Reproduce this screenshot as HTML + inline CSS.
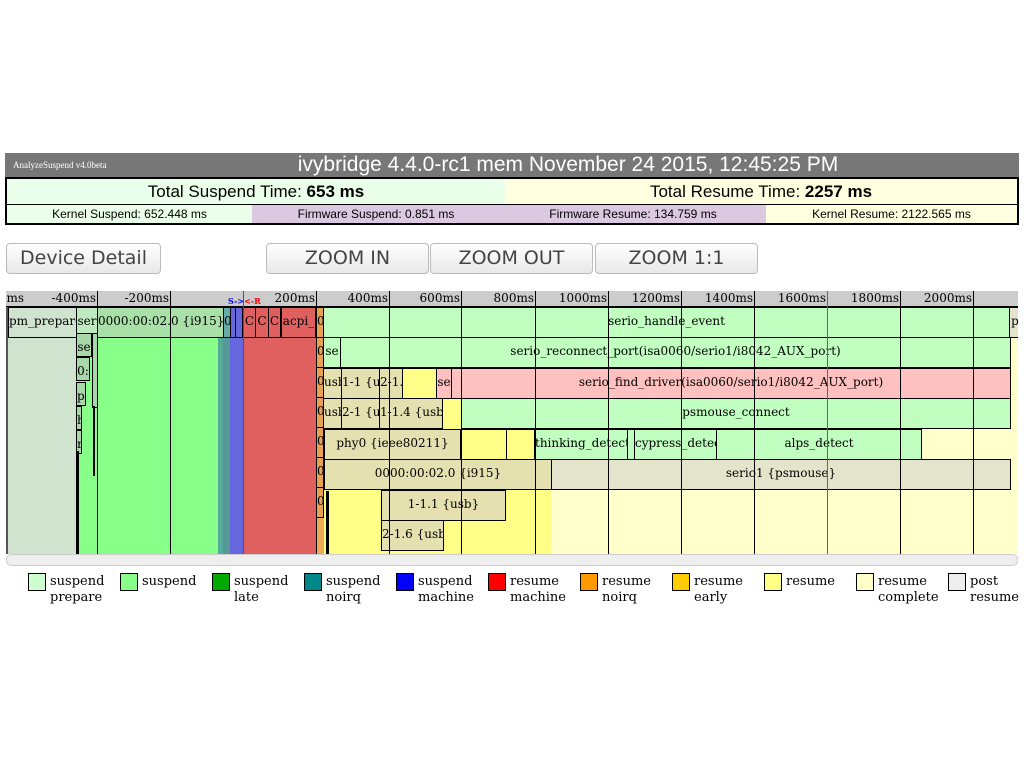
<!DOCTYPE html>
<html><head><meta charset="utf-8"><style>
*{margin:0;padding:0;box-sizing:border-box}
body{width:1024px;height:768px;background:#fff;position:relative;overflow:hidden;font-family:"Liberation Sans",sans-serif}
.a{position:absolute}
.hdr{left:5px;top:153px;width:1014px;height:24px;background:#777;color:#fff}
.tbl{left:5px;top:177px;width:1014px;height:48px;border:2px solid #000;background:#fff}
.c{position:absolute;text-align:center;color:#000}
.btn{position:absolute;top:243px;height:31px;border:1px solid #bbb;border-radius:4px;background:linear-gradient(#fff,#e8e8e8);font-size:19px;color:#444;text-align:center;line-height:29px;font-family:"DejaVu Sans",sans-serif}
.tl{left:6px;top:291px;width:1012px;height:263px;overflow:hidden;background:#fff;font-family:"DejaVu Serif",serif;font-size:12px}
.b{position:absolute;border:1px solid #000;overflow:hidden;white-space:nowrap;text-align:center;line-height:27px;height:31px}
.g{position:absolute;top:0;width:1px;height:263px;background:#000}
.lbl{position:absolute;top:0;width:70px;text-align:right;font-size:12px;line-height:15px;font-family:"DejaVu Serif",serif}
.lg{position:absolute;top:573px;font-family:"DejaVu Serif",serif;font-size:13px;line-height:16px}
.lg i{position:absolute;left:0;top:0;width:18px;height:18px;border:1px solid #000}
.lg span{position:absolute;left:22px;top:1px;white-space:nowrap}
</style></head><body>
<div class="a hdr"><div class="a" style="left:8px;top:7px;font-size:9px;font-family:'Liberation Serif',serif">AnalyzeSuspend v4.0beta</div><div class="a" style="left:112px;width:902px;text-align:center;top:0;font-size:21px;line-height:24px">ivybridge 4.4.0-rc1 mem November 24 2015, 12:45:25 PM</div></div>
<div class="a tbl">
<div class="c" style="left:0;top:0;width:498px;height:25px;background:#eaffea;font-size:17px;line-height:25px">Total Suspend Time: <b>653 ms</b></div>
<div class="c" style="left:498px;top:0;width:512px;height:25px;background:#ffffe0;font-size:17px;line-height:25px">Total Resume Time: <b>2257 ms</b></div>
<div class="a" style="left:0;top:25px;width:1010px;height:1px;background:#000"></div>
<div class="c" style="left:0;top:26px;width:245px;height:18px;background:#eaffea;font-size:12px;line-height:18px">Kernel Suspend: 652.448 ms</div>
<div class="c" style="left:245px;top:26px;width:248px;height:18px;background:#dcc8e0;font-size:12px;line-height:18px">Firmware Suspend: 0.851 ms</div>
<div class="c" style="left:493px;top:26px;width:266px;height:18px;background:#dcc8e0;font-size:12px;line-height:18px">Firmware Resume: 134.759 ms</div>
<div class="c" style="left:759px;top:26px;width:251px;height:18px;background:#ffffe0;font-size:12px;line-height:18px">Kernel Resume: 2122.565 ms</div>
</div>
<div class="btn" style="left:6px;width:155px">Device Detail</div>
<div class="btn" style="left:266px;width:163px">ZOOM IN</div>
<div class="btn" style="left:430px;width:163px">ZOOM OUT</div>
<div class="btn" style="left:595px;width:163px">ZOOM 1:1</div>

<div class="a tl">
<div class="a" style="left:0;top:0;width:1012px;height:16px;background:#ccc;border-bottom:1px solid #000"></div>
<div class="a" style="left:2px;top:16px;width:68px;height:247px;background:#cfe3cf"></div>
<div class="a" style="left:0;top:16px;width:2px;height:247px;background:#555"></div>
<div class="a" style="left:70px;top:16px;width:142px;height:247px;background:#88ff88"></div>
<div class="a" style="left:212px;top:16px;width:12px;height:247px;background:#5a9"></div>
<div class="a" style="left:217px;top:16px;width:7px;height:247px;background:#599"></div>
<div class="a" style="left:224px;top:16px;width:13px;height:247px;background:#66d"></div>
<div class="a" style="left:237px;top:16px;width:73px;height:247px;background:#e06060"></div>
<div class="a" style="left:310px;top:16px;width:8px;height:247px;background:#ea5"></div>
<div class="a" style="left:318px;top:16px;width:227px;height:247px;background:#ffff88"></div>
<div class="a" style="left:545px;top:16px;width:467px;height:247px;background:#ffffcc"></div>
<div class="b" style="left:2px;top:16px;width:69px;background:#cfe3cf">pm_prepare</div>
<div class="b" style="left:70px;top:16px;width:22px;background:#bfe9bf">ser</div>
<div class="b" style="left:91px;top:16px;width:127px;background:#a8e0a8">0000:00:02.0 {i915}</div>
<div class="b" style="left:70px;top:42px;width:16px;height:24px;background:#a8d8a8">se</div>
<div class="b" style="left:70px;top:66px;width:14px;height:24px;background:#a8d8a8">0:</div>
<div class="b" style="left:70px;top:91px;width:10px;height:24px;background:#a8d8a8">pl</div>
<div class="b" style="left:70px;top:115px;width:6px;height:24px;background:#a8d8a8">h</div>
<div class="b" style="left:70px;top:139px;width:6px;height:24px;background:#a8d8a8">r</div>
<div class="b" style="left:86px;top:42px;width:6px;height:75px;background:#a8d8a8"></div>
<div class="a" style="left:70px;top:160px;width:3px;height:103px;background:#000"></div>
<div class="a" style="left:87px;top:115px;width:2px;height:70px;background:#000"></div>
<div class="b" style="left:217px;top:16px;width:8px;background:#6aa">0</div>
<div class="b" style="left:224px;top:16px;width:6px;background:#66d"></div>
<div class="b" style="left:229px;top:16px;width:8px;background:#66d"></div>
<div class="b" style="left:237px;top:16px;width:13px;background:#e06060">C</div>
<div class="b" style="left:249px;top:16px;width:14px;background:#e06060">C</div>
<div class="b" style="left:262px;top:16px;width:13px;background:#e06060">C</div>
<div class="b" style="left:275px;top:16px;width:35px;background:#e06060">acpi_</div>
<div class="b" style="left:310px;top:16px;width:8px;background:#e9a050">0</div>
<div class="b" style="left:310px;top:46px;width:8px;background:#e9a050">0</div>
<div class="b" style="left:310px;top:76px;width:8px;background:#e9a050">0</div>
<div class="b" style="left:310px;top:106px;width:8px;background:#e9a050">0</div>
<div class="b" style="left:310px;top:136px;width:8px;background:#e9a050">0</div>
<div class="b" style="left:310px;top:166px;width:8px;background:#e9a050">0</div>
<div class="b" style="left:310px;top:196px;width:8px;background:#e9a050">0</div>
<div class="b" style="left:317px;top:16px;width:687px;background:#c0ffc0">serio_handle_event</div>
<div class="b" style="left:1003px;top:16px;width:12px;background:#e4e4cc">p</div>
<div class="b" style="left:317px;top:46px;width:18px;background:#c0ffc0">se</div>
<div class="b" style="left:334px;top:46px;width:671px;background:#c0ffc0">serio_reconnect_port(isa0060/serio1/i8042_AUX_port)</div>
<div class="b" style="left:317px;top:77px;width:19px;background:#e4e0b0">usb</div>
<div class="b" style="left:335px;top:77px;width:39px;background:#e4e0b0">1-1 {u</div>
<div class="b" style="left:373px;top:77px;width:24px;background:#e4e0b0">2-1.</div>
<div class="b" style="left:396px;top:77px;width:35px;background:#ffff88"></div>
<div class="b" style="left:430px;top:77px;width:16px;background:#ffc0c0">se</div>
<div class="b" style="left:445px;top:77px;width:560px;background:#ffc0c0">serio_find_driver(isa0060/serio1/i8042_AUX_port)</div>
<div class="b" style="left:317px;top:107px;width:19px;background:#e4e0b0">usb</div>
<div class="b" style="left:335px;top:107px;width:39px;background:#e4e0b0">2-1 {u</div>
<div class="b" style="left:373px;top:107px;width:64px;background:#e4e0b0">1-1.4 {usb</div>
<div class="b" style="left:455px;top:107px;width:550px;background:#c0ffc0">psmouse_connect</div>
<div class="b" style="left:318px;top:138px;width:137px;background:#e4e0b0">phy0 {ieee80211}</div>
<div class="b" style="left:455px;top:138px;width:46px;background:#ffff88"></div>
<div class="b" style="left:500px;top:138px;width:29px;background:#ffff88"></div>
<div class="b" style="left:528px;top:138px;width:94px;background:#c0ffc0">thinking_detects</div>
<div class="b" style="left:621px;top:138px;width:8px;background:#c0ffc0"></div>
<div class="b" style="left:628px;top:138px;width:83px;background:#c0ffc0">cypress_detec</div>
<div class="b" style="left:710px;top:138px;width:206px;background:#c0ffc0">alps_detect</div>
<div class="b" style="left:318px;top:168px;width:228px;background:#e4e0b0">0000:00:02.0 {i915}</div>
<div class="b" style="left:545px;top:168px;width:460px;background:#e4e4cc">serio1 {psmouse}</div>
<div class="b" style="left:375px;top:199px;width:125px;background:#e4e0b0">1-1.1 {usb}</div>
<div class="b" style="left:375px;top:229px;width:63px;background:#e4e0b0">2-1.6 {usb</div>
<div class="a" style="left:320px;top:200px;width:3px;height:63px;background:#000"></div>
<div class="g" style="left:91px"></div><div class="g" style="left:164px"></div><div class="g" style="left:237px;background:#555"></div>
<div class="g" style="left:310px"></div><div class="g" style="left:383px"></div><div class="g" style="left:455px"></div>
<div class="g" style="left:529px"></div><div class="g" style="left:602px"></div><div class="g" style="left:675px"></div>
<div class="g" style="left:748px"></div><div class="g" style="left:821px;background:#666"></div><div class="g" style="left:894px"></div><div class="g" style="left:967px"></div>
<div class="lbl" style="left:-52px">-600ms</div>
<div class="lbl" style="left:20px">-400ms</div>
<div class="lbl" style="left:93px">-200ms</div>
<div class="lbl" style="left:222px;width:auto;font-size:8px;font-weight:bold;color:#00f;top:3px">S-&gt;<span style="color:#f00">&lt;-R</span></div>
<div class="lbl" style="left:239px">200ms</div>
<div class="lbl" style="left:312px">400ms</div>
<div class="lbl" style="left:384px">600ms</div>
<div class="lbl" style="left:458px">800ms</div>
<div class="lbl" style="left:531px">1000ms</div>
<div class="lbl" style="left:604px">1200ms</div>
<div class="lbl" style="left:677px">1400ms</div>
<div class="lbl" style="left:750px">1600ms</div>
<div class="lbl" style="left:823px">1800ms</div>
<div class="lbl" style="left:896px">2000ms</div>
</div>
<div class="a" style="left:6px;top:554px;width:1012px;height:12px;background:#eee;border:1px solid #ccc;border-radius:5px"></div>

<div class="lg" style="left:28px"><i style="background:#cfc"></i><span>suspend<br>prepare</span></div>
<div class="lg" style="left:120px"><i style="background:#88ff88"></i><span>suspend</span></div>
<div class="lg" style="left:212px"><i style="background:#0a0"></i><span>suspend<br>late</span></div>
<div class="lg" style="left:304px"><i style="background:#088"></i><span>suspend<br>noirq</span></div>
<div class="lg" style="left:396px"><i style="background:#00f"></i><span>suspend<br>machine</span></div>
<div class="lg" style="left:488px"><i style="background:#f00"></i><span>resume<br>machine</span></div>
<div class="lg" style="left:580px"><i style="background:#f90"></i><span>resume<br>noirq</span></div>
<div class="lg" style="left:672px"><i style="background:#fc0"></i><span>resume<br>early</span></div>
<div class="lg" style="left:764px"><i style="background:#ff8"></i><span>resume</span></div>
<div class="lg" style="left:856px"><i style="background:#ffc"></i><span>resume<br>complete</span></div>
<div class="lg" style="left:948px"><i style="background:#eee"></i><span>post<br>resume</span></div>
</body></html>
